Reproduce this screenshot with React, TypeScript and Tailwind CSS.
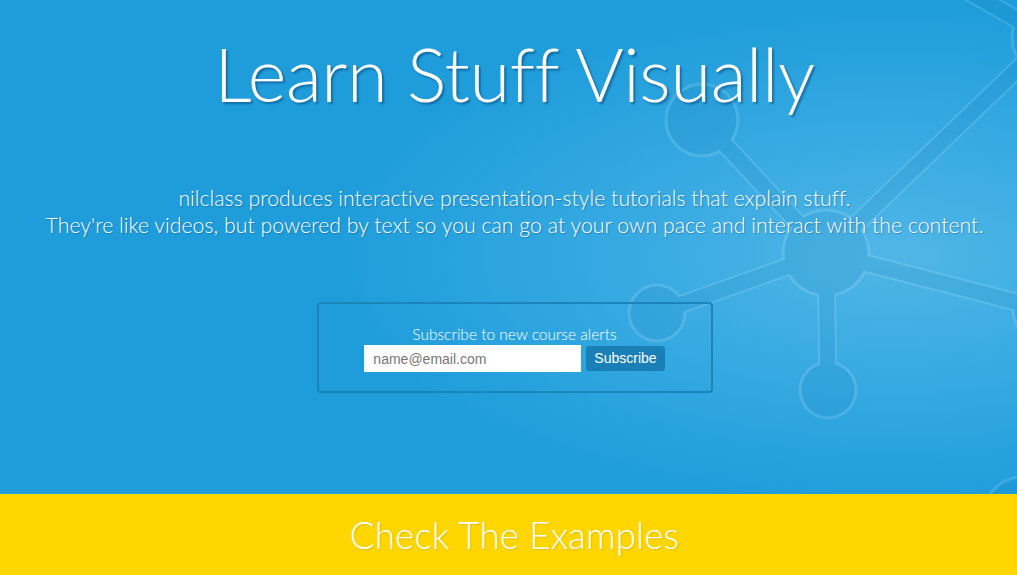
import React from "react";

const nodes = [
  { x: 702, y: 120, r: 36 },
  { x: 657, y: 313, r: 28 },
  { x: 826, y: 253, r: 43 },
  { x: 828, y: 390, r: 28 },
  { x: 1050, y: 38, r: 38 },
  { x: 1047, y: 310, r: 34 },
  { x: 1022, y: 515, r: 38 },
];

const bands = [
  [702, 120, 826, 253],
  [657, 313, 826, 253],
  [826, 253, 828, 390],
  [826, 253, 1050, 38],
  [826, 253, 1047, 310],
  [1050, 38, 930, -30],
];

function Molecule() {
  const shapes = (w: number, dr: number, color: string) => (
    <g>
      {bands.map((b, i) => (
        <line key={i} x1={b[0]} y1={b[1]} x2={b[2]} y2={b[3]} stroke={color} strokeWidth={w} />
      ))}
      {nodes.map((n, i) => (
        <circle key={i} cx={n.x} cy={n.y} r={n.r + dr} fill={color} />
      ))}
    </g>
  );
  return (
    <svg className="absolute inset-0 pointer-events-none" width="1017" height="494" viewBox="0 0 1017 494">
      <defs>
        <mask id="ring">
          <rect width="1017" height="494" fill="black" />
          {shapes(19, 1.5, "white")}
          {shapes(15, -1.5, "black")}
        </mask>
      </defs>
      <g opacity="0.05">{shapes(15, -1.5, "#00467f")}</g>
      <rect width="1017" height="494" fill="rgba(255,255,255,0.13)" mask="url(#ring)" />
    </svg>
  );
}

export default function App() {
  return (
    <div className="w-full min-h-screen font-['Lato',sans-serif] [font-variant-ligatures:none]">
      <section className="relative h-[494px] overflow-hidden bg-[#1f9ddb]">
        <div className="absolute inset-0 bg-[radial-gradient(ellipse_55%_50%_at_88%_52%,#50b6e7_0%,#39abe2_45%,rgba(31,157,219,0)_100%)]" />
        <Molecule />
        <div className="relative flex flex-col items-center pl-3 text-white">
          <h1
            className="mt-[22px] text-[74px] leading-[104px] font-light tracking-[-0.4px]"
            style={{ textShadow: "2px 2px 2px rgba(0,50,100,0.45)" }}
          >
            Learn Stuff Visually
          </h1>
          <p
            className="mt-[59px] text-center text-[21.3px] leading-[27px] font-light"
            style={{ textShadow: "1px 1px 1px rgba(0,50,100,0.35)" }}
          >
            nilclass produces interactive presentation-style tutorials that explain stuff.
            <br />
            They're like videos, but powered by text so you can go at your own pace and interact with the content.
          </p>
          <div className="mt-[63px] w-[396px] h-[91px] rounded-[4px] border-2 border-[#1b84ba] flex flex-col items-center pt-[20px]">
            <div className="text-[15.5px] leading-[20px] font-light">Subscribe to new course alerts</div>
            <div className="flex items-center gap-[5px] mt-[1px]">
              <input
                type="text"
                placeholder="name@email.com"
                className="w-[217px] h-[27px] bg-white px-[9px] text-[14px] text-gray-700 placeholder:text-[#777] font-['Liberation_Sans',sans-serif] outline-none"
              />
              <button className="h-[25px] px-[8px] rounded-[3px] bg-[#1a7fb6] text-white text-[14px] font-['Liberation_Sans',sans-serif]">
                Subscribe
              </button>
            </div>
          </div>
        </div>
      </section>
      <section className="h-[81px] bg-[#ffd600] flex items-center justify-center pl-3">
        <h2 className="text-[37px] font-light text-white" style={{ textShadow: "1px 1px 1px rgba(160,120,0,0.25)" }}>
          Check The Examples
        </h2>
      </section>
    </div>
  );
}
